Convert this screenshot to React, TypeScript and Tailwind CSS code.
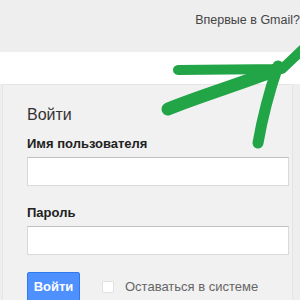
import React from 'react';

const font = { fontFamily: 'Arial, "Liberation Sans", sans-serif' };

// Hand-drawn green arrow over the page
const Arrow = () => (
  <svg className="absolute left-0 top-0 pointer-events-none" width="300" height="300" viewBox="0 0 300 300">
    <g fill="none" stroke="#22a546" strokeLinecap="round" strokeLinejoin="round">
      <path d="M178 70 L 282 69 L 303 49" strokeWidth="10" />
      <path d="M168 109 C 200 96 240 84 276 70" strokeWidth="13" />
      <path d="M258 143 C 262 120 268 95 278 66" strokeWidth="11" />
    </g>
  </svg>
);

export default function App() {
  return (
    <div className="relative w-[300px] h-[300px] overflow-hidden bg-[#eeeeee]" style={font}>
      {/* Header */}
      <div className="h-[52px] flex items-start justify-end pt-[11px]">
        <span className="text-[12.5px] text-[#444] whitespace-nowrap">Впервые в Gmail?</span>
      </div>
      <div className="h-[32px] bg-white" />

      {/* Login card */}
      <div className="ml-[2px] w-[291px] h-[240px] bg-[#f1f1f1] border border-[#e5e5e5] pl-[24px] pr-[3px] pt-[20px]">
        <div className="text-[16px] text-[#333] leading-[20px]">Войти</div>

        <div className="mt-[11px] text-[13px] font-bold text-[#222] leading-[16px]">Имя пользователя</div>
        <div className="mt-[5px] h-[29px] bg-white border border-[#d9d9d9] border-t-[#c0c0c0]" />

        <div className="mt-[19px] text-[13px] font-bold text-[#222] leading-[16px]">Пароль</div>
        <div className="mt-[5px] h-[29px] bg-white border border-[#d9d9d9] border-t-[#c0c0c0]" />

        <div className="mt-[17px] flex items-center">
          <button className="w-[53px] h-[30px] rounded-[2px] bg-[#4d90fe] border border-[#3079ed] text-white text-[13px] font-bold">
            Войти
          </button>
          <span className="ml-[22px] w-[12px] h-[12px] bg-white border border-[#e0e0e0] rounded-[1px]" />
          <span className="ml-[11px] text-[13px] text-[#666]">Оставаться в системе</span>
        </div>
      </div>

      <Arrow />
    </div>
  );
}
